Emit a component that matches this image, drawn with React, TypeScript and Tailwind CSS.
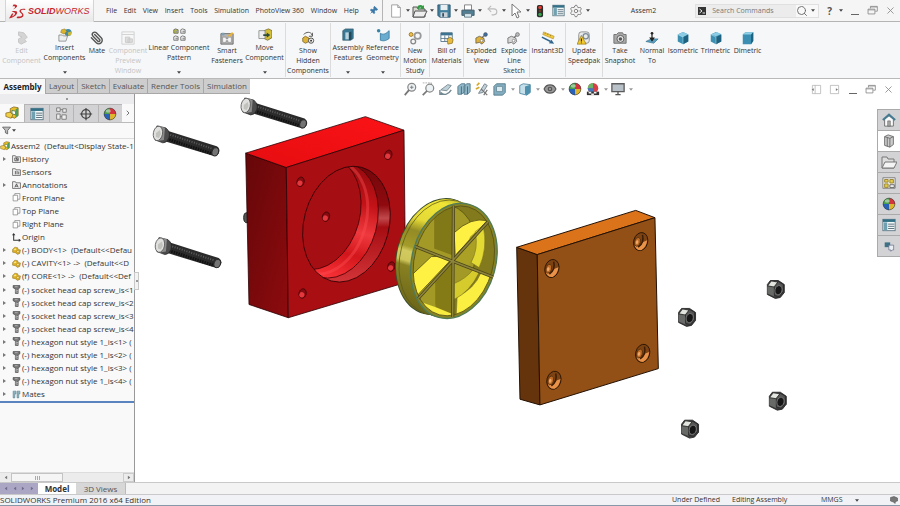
import React from "react";
import type { ReactNode } from "react";
import { Search, X, Pin, Settings, Paperclip, Undo2, Eye, ChevronRight } from "lucide-react";

type IconProps = { children: ReactNode; size?: string };

function Icon({ children, size = "size-[14px]" }: IconProps) {
  return (
    <svg viewBox="0 0 16 16" className={`${size} shrink-0`} aria-hidden="true">
      {children}
    </svg>
  );
}

function Caret({ className = "text-[#444]" }: { className?: string }) {
  return (
    <svg viewBox="0 0 6 4" className={`h-[3px] w-[4px] shrink-0 ${className}`} aria-hidden="true">
      <path d="M0 0h6L3 4z" fill="currentColor" />
    </svg>
  );
}

/* ---------- drawings for the icons ---------- */

const partShape = (
  <>
    <path d="M1 6l4-4 5 1 1 3 4 1-1 6-4 2-4-3-5-1z" fill="#dcae22" stroke="#7d6312" strokeWidth=".8" />
    <path d="M3 6l3-2 2 2-3 2z" fill="#fbe98d" />
    <circle cx="10.500" cy="10" r="2" fill="#fff2a8" stroke="#8b6a10" strokeWidth=".7" />
  </>
);

const assemblyShape = (
  <>
    <path d="M6 3l4-2 5 1v9l-4 3-5-2z" fill="#e8bd2b" stroke="#755d12" strokeWidth=".8" />
    <path d="M8 5l4 1v4l-4-1z" fill="#fff" stroke="#5b7f49" />
    <path d="M1 8l5-1 3 3-2 4-6-2z" fill="#f2cd46" stroke="#806616" strokeWidth=".8" />
    <path d="M12 4l3-2v9l-3 2z" fill="#4f9c57" />
  </>
);

function Cube({ variant = 0 }: { variant?: number }) {
  if (variant === 2) {
    return (
      <Icon>
        <path d="M2 4l3-2.500h9v10L11.500 15H2z" fill="#3b8fb2" />
        <path d="M2 4l3-2.500h9L11.500 4z" fill="#8fd0e6" />
        <path d="M11.500 4L14 1.500v10L11.500 15z" fill="#1f6180" />
      </Icon>
    );
  }
  return (
    <Icon>
      <path d="M8 1l6 3v8l-6 3-6-3V4z" fill="#3b8fb2" />
      <path d={variant ? "M2 4l7-3 5 2.500L8 6z" : "M2 4l6-3 6 3-6 3z"} fill="#8ccbe4" />
      <path d="M8 7l6-3v8l-6 3z" fill="#1f6180" />
      <path d="M2 4l6 3v8" fill="none" stroke="#b9e2f0" strokeWidth=".6" />
    </Icon>
  );
}

function Ball({ size }: { size?: string }) {
  return (
    <Icon size={size}>
      <circle cx="8" cy="8" r="7" fill="#e8e8e8" />
      <path d="M8 8V1a7 7 0 0 0-7 7z" fill="#4aa04c" />
      <path d="M8 8H1a7 7 0 0 0 7 7z" fill="#2862b8" />
      <path d="M8 8v7a7 7 0 0 0 7-7z" fill="#e0b52e" />
      <path d="M8 8h7a7 7 0 0 0-7-7z" fill="#d5343c" />
      <ellipse cx="6" cy="4.500" rx="3" ry="2" fill="#fff" opacity=".45" />
      <circle cx="8" cy="8" r="6.700" fill="none" stroke="#3c3c3c" strokeWidth=".7" />
    </Icon>
  );
}

function Gears({ left, right }: { left: string; right: string }) {
  return (
    <Icon>
      <path d="M4.500 10.500L12 4" stroke="#777" strokeWidth="1.500" />
      <circle cx="12" cy="4" r="2.200" fill={right} stroke="#555" strokeWidth=".6" />
      <path d="M1 8l4-2 5 2 1 4-3 3-3-2-4 1z" fill={left} stroke="#555" strokeWidth=".8" />
      <circle cx="7.500" cy="11" r="1.500" fill="#fff" stroke="#555" strokeWidth=".6" />
    </Icon>
  );
}

function ListSheet({ size }: { size?: string }) {
  return (
    <Icon size={size}>
      <rect x="1" y="1.500" width="14" height="13" fill="#f2f7f8" stroke="#5a7480" />
      <rect x="1" y="1.500" width="14" height="3" fill="#317086" />
      <rect x="2" y="5" width="4" height="9" fill="#6fa1b0" />
      <path d="M7 7h7M7 9.500h7M7 12h7" stroke="#4b6370" strokeWidth="1" />
    </Icon>
  );
}

function Restore() {
  return (
    <Icon size="size-[11px]">
      <path d="M5 5V2h10v7h-3M1.500 6h10v7h-10z" fill="none" stroke="#888" strokeWidth="1.200" />
      <path d="M1.500 7.200h10M5 3h10" stroke="#888" />
    </Icon>
  );
}

function WindowButtons() {
  return (
    <div className="flex items-center gap-[7px] text-[#888]">
      <button aria-label="Minimize" className="flex size-[11px] items-end justify-center pb-px">
        <span className="h-px w-2 bg-[#666]" />
      </button>
      <button aria-label="Restore"><Restore /></button>
      <button aria-label="Close"><X className="size-[11px]" strokeWidth={1.8} /></button>
    </div>
  );
}

/* ---------- title bar ---------- */

const menus = ["File", "Edit", "View", "Insert", "Tools", "Simulation", "PhotoView 360", "Window", "Help"];

const quick: { name: string; wide: boolean; icon: ReactNode }[] = [
  {
    name: "New", wide: true,
    icon: <Icon><path d="M3 1h7l3 3v11H3z" fill="#fff" stroke="#999" /><path d="M10 1v3h3" fill="#ddd" stroke="#999" /></Icon>,
  },
  {
    name: "Open", wide: true,
    icon: (
      <Icon size="size-[16px]">
        <path d="M1 4h4l1 2h7v8H1z" fill="#d9d9d2" stroke="#555" />
        <path d="M3 8h12l-3 6H1z" fill="#eee" stroke="#555" />
        <path d="M5 5c0-3 4-4 6-2l1-1v4H8l1-1c-1-1-2 0-2 2z" fill="#359b45" />
      </Icon>
    ),
  },
  {
    name: "Save", wide: true,
    icon: (
      <Icon>
        <path d="M1 1h14v14H3l-2-2z" fill="#417f9c" stroke="#2d536a" />
        <rect x="4" y="1" width="8" height="6" fill="#e9eef0" />
        <rect x="4" y="9.500" width="8" height="5.500" fill="#c9d2d8" />
        <rect x="6" y="10.500" width="2" height="4" fill="#344f60" />
      </Icon>
    ),
  },
  {
    name: "Print", wide: true,
    icon: (
      <Icon>
        <path d="M4 1h8v6H4z" fill="#fff" stroke="#777" />
        <path d="M1 7h14v6H1z" fill="#527e93" stroke="#3f5967" />
        <path d="M4 11h8v4H4z" fill="#d7e9f0" stroke="#59717d" />
      </Icon>
    ),
  },
  { name: "Undo", wide: true, icon: <Undo2 className="size-[13px] text-[#bbb]" /> },
  {
    name: "Select", wide: true,
    icon: <Icon size="size-[16px]"><path d="M4 1v12l3-3 2 5 2-1-2-5h4z" fill="#fff" stroke="#777" /></Icon>,
  },
  {
    name: "Rebuild", wide: false,
    icon: (
      <Icon>
        <rect x="4.500" y="1" width="7" height="14" rx="2" fill="#2d2d2d" />
        <circle cx="8" cy="4" r="2" fill="#e33c32" />
        <circle cx="8" cy="8" r="1.500" fill="#6e3a20" />
        <circle cx="8" cy="12" r="2" fill="#37a34b" />
      </Icon>
    ),
  },
  { name: "File properties", wide: false, icon: <ListSheet size="size-[13px]" /> },
  { name: "Options", wide: true, icon: <Settings className="size-[14px] text-[#777]" strokeWidth={1.5} /> },
];

function TitleBar() {
  return (
    <header className="flex h-[22px] items-center border-b border-[#b4b4b4] bg-[#f5f5f6]">
      <div className="ml-[5px] flex h-[23px] w-[89px] shrink-0 items-center gap-[2px] self-start border-x border-b border-[#d5d5d5] bg-gradient-to-b from-white to-[#e8e8e8] pl-[3px] text-[#c3272d]">
        <svg viewBox="0 0 34 34" className="size-[17px] shrink-0" role="img" aria-label="DS">
          <path d="M9 3c5 0 8 1 7 4-1 2-4 4-8 6 3-3 5-5 4-6-1-1-3-1-5 0zM5 17c8-2 13-1 11 4-2 5-8 8-16 10l6-10h3l-3 6c4-2 6-4 6-6 0-2-3-3-7-4z" fill="currentColor" />
          <path d="M33 12c-7-2-13 1-12 5 1 3 7 5 5 8-1 2-5 2-9 2l-2 3c7 1 13 0 14-5 1-4-5-6-5-9 0-2 3-3 8-2z" fill="currentColor" />
        </svg>
        <span className="font-['Liberation_Sans',sans-serif] text-[9px] leading-none font-bold italic">
          SOLID<span className="font-normal">WORKS</span>
        </span>
      </div>
      <nav aria-label="Main menu" className="ml-3 flex w-[253px] shrink-0 items-center justify-between">
        {menus.map((m) => (
          <button key={m} className="whitespace-nowrap">{m}</button>
        ))}
      </nav>
      <button aria-label="Keep menu visible" className="ml-[10px]">
        <Pin className="size-[9px] rotate-45 fill-[#3c79a8] text-[#3c79a8]" />
      </button>
      <div className="ml-1 h-full w-px bg-[#b5b5b5]" />
      <div className="ml-[5px] flex shrink-0 items-center">
        {quick.map((q) => (
          <button key={q.name} aria-label={q.name} className={`flex items-center justify-between ${q.wide ? "w-6 pr-[2px]" : "w-[18px]"}`}>
            <span className="flex w-4 justify-center">{q.icon}</span>
            {q.wide && <Caret />}
          </button>
        ))}
      </div>
      <h1 className="min-w-0 flex-1 text-center text-[7px] font-normal">Assem2</h1>
      <div className="flex h-[14px] w-[124px] shrink-0 items-center border border-[#e0e0e0] bg-[#ececec]">
        <Icon size="ml-[2px] size-[8px]">
          <rect width="16" height="16" fill="#333" />
          <path d="M3 4l5 4-5 4M9 12h5" stroke="#fff" strokeWidth="1.800" fill="none" />
        </Icon>
        <input aria-label="Search Commands" placeholder="Search Commands" className="ml-[6px] min-w-0 flex-1 bg-transparent placeholder:text-[#777] outline-none" />
        <button aria-label="Search" className="flex h-full w-[22px] items-center justify-between bg-[#f8f8f8] pr-[3px]">
          <Search className="size-[12px] text-[#666]" strokeWidth={1.8} />
          <Caret />
        </button>
      </div>
      <button aria-label="Help" className="mr-[6px] ml-[8px] flex items-center gap-[7px] text-[10px] font-bold text-[#555]">
        ?<Caret />
      </button>
      <div className="pr-[4px]"><WindowButtons /></div>
    </header>
  );
}

/* ---------- ribbon ---------- */

type Tool = { lines: string[]; width: string; icon: ReactNode; menu?: boolean; disabled?: boolean; sep?: boolean };

const tools: Tool[] = [
  {
    lines: ["Edit", "Component"], width: "w-[43px]", disabled: true,
    icon: <Icon><path d="M4 1l6 1 4 5-3 3 2 2-6 3-3-2V9l4-2-4-2z" fill="#d4d4d4" stroke="#c3c3c3" /></Icon>,
  },
  {
    lines: ["Insert", "Components"], width: "w-[43px]", menu: true,
    icon: (
      <Icon>
        <circle cx="11.500" cy="5" r="4" fill="#3d8ba5" />
        <path d="M4 2l4-1 2 3-3 3-4-2z" fill="#ddb32b" stroke="#7a6518" strokeWidth=".5" />
        <path d="M11 5l4-1v4l-3 1z" fill="#c8b73a" />
        <path d="M1 8h4l1 1h5l-2 6H1z" fill="#eceef0" stroke="#777" strokeWidth=".8" />
      </Icon>
    ),
  },
  { lines: ["Mate"], width: "w-[22px]", icon: <Paperclip className="size-[14px] -scale-x-100 text-[#555]" strokeWidth={2.4} /> },
  {
    lines: ["Component", "Preview", "Window"], width: "w-[40px]", disabled: true,
    icon: <Icon><path d="M1 1h14v14H1zM1 4h14" fill="none" stroke="#cfcfcf" /><path d="M5 7h5v6H5zM8 9h5v4H8z" fill="#dedede" stroke="#c8c8c8" /></Icon>,
  },
  {
    lines: ["Linear Component", "Pattern"], width: "w-[62px]", menu: true,
    icon: (
      <Icon>
        <path d="M2 2l2-1 3 1v4H2z" fill="#b8bd45" stroke="#555" strokeWidth=".8" />
        <path d="M10 2l2-1 3 1v4h-5zM2 10l2-1 3 1v4H2zM10 10l2-1 3 1v4h-5z" fill="#eee" stroke="#555" strokeWidth=".8" />
        <path d="M4 3h3v2H4zM12 3h3v2h-3zM4 11h3v2H4zM12 11h3v2h-3z" fill="#999" />
      </Icon>
    ),
  },
  {
    lines: ["Smart", "Fasteners"], width: "w-[34px]",
    icon: (
      <Icon>
        <path d="M1 3h14v12H1z" fill="#b5b5b5" stroke="#666" />
        <path d="M3 7h4v2h2V7h4v6H9v-2H7v2H3z" fill="#f5f5f5" stroke="#777" strokeWidth=".6" />
        <path d="M9 5l5-4 1 2-4 4z" fill="#e9b33a" />
        <path d="M2 2h3v3H2z" fill="#7f9fb0" />
      </Icon>
    ),
  },
  {
    lines: ["Move", "Component"], width: "w-[41px]", menu: true, sep: true,
    icon: (
      <Icon>
        <path d="M7 3l5-2 4 2v8l-5 3-4-2z" fill="#d5bf36" stroke="#65591a" strokeWidth=".8" />
        <path d="M1 3h7v9H1z" fill="#eee" stroke="#777" strokeWidth=".8" />
        <path d="M6 7h4V5l4 3-4 3V9H6z" fill="#2e4b38" />
      </Icon>
    ),
  },
  {
    lines: ["Show", "Hidden", "Components"], width: "w-[44px]", sep: true,
    icon: (
      <Icon>
        <path d="M3 4c3-3 8-4 10 1M13 2v4H9" fill="none" stroke="#444" />
        <path d="M2 8l3-2 4 2v4l-4 2-3-2z" fill="#ddb33c" stroke="#6b5512" strokeWidth=".8" />
        <circle cx="11.500" cy="11" r="3" fill="#eee" stroke="#444" />
        <circle cx="11.500" cy="11" r="1" fill="#222" />
      </Icon>
    ),
  },
  {
    lines: ["Assembly", "Features"], width: "w-[34px]", menu: true,
    icon: (
      <Icon>
        <path d="M2 3l3-2h9v11l-3 2H2z" fill="#3a7894" stroke="#2c5264" strokeWidth=".7" />
        <path d="M5 5h4v8H5z" fill="#b9d4df" />
        <path d="M9 5l3-1v9l-3 1z" fill="#20495c" />
      </Icon>
    ),
  },
  {
    lines: ["Reference", "Geometry"], width: "w-[35px]", menu: true, sep: true,
    icon: (
      <Icon>
        <circle cx="3" cy="3" r="2" fill="#3a83a6" />
        <path d="M5 6c3 2 6 1 10-3v9c-4 3-7 3-10 2z" fill="#6aacd0" stroke="#3a7ea4" />
      </Icon>
    ),
  },
  {
    lines: ["New", "Motion", "Study"], width: "w-[28px]", sep: true,
    icon: (
      <Icon>
        <circle cx="3.500" cy="4" r="2.200" fill="#f0c04a" stroke="#9a7420" />
        <circle cx="11" cy="5.500" r="3.600" fill="none" stroke="#999" strokeWidth="2" />
        <circle cx="6" cy="12" r="2.700" fill="none" stroke="#888" strokeWidth="1.500" />
      </Icon>
    ),
  },
  {
    lines: ["Bill of", "Materials"], width: "w-[33px]", sep: true,
    icon: (
      <Icon>
        <path d="M1 2h13v10H1z" fill="#fff" stroke="#557688" />
        <path d="M1 2h13v3H1z" fill="#3c7391" />
        <path d="M1 8.500h13M5.500 5v7M10 5v7" stroke="#557688" />
        <path d="M8 9l4-2 3 3-1 4-5 1z" fill="#e7bb3f" stroke="#806213" strokeWidth=".7" />
      </Icon>
    ),
  },
  { lines: ["Exploded", "View"], width: "w-[35px]", icon: <Gears left="#e0b23a" right="#3d6ea0" /> },
  { lines: ["Explode", "Line", "Sketch"], width: "w-[30px]", sep: true, icon: <Gears left="#d8d8d8" right="#b9b9b9" /> },
  {
    lines: ["Instant3D"], width: "w-[35px]", sep: true,
    icon: (
      <Icon>
        <path d="M2 4l1-3 12 5-1 3z" fill="#f0ca3e" stroke="#a9851d" strokeWidth=".6" />
        <path d="M5 2l-.5 1.500M8 3l-.5 1.500M11 4.500L10.500 6" stroke="#7d6312" strokeWidth=".7" />
        <path d="M1 7l10 5" stroke="#2f6690" strokeWidth="1.800" />
        <path d="M15 14.500l-6-.5 3-4z" fill="#2f6690" />
      </Icon>
    ),
  },
  {
    lines: ["Update", "Speedpak"], width: "w-[36px]", sep: true,
    icon: (
      <Icon>
        <rect x="2" y="1" width="12" height="13" rx="3" fill="#e8eaeb" stroke="#888" />
        <circle cx="10" cy="6" r="3" fill="none" stroke="#7c8c99" strokeWidth="1.500" />
        <path d="M5 5l5.500 10H0z" fill="#f3c92e" stroke="#8a6d0d" strokeWidth=".7" />
        <path d="M5 8.500v3.500M5 13v1" stroke="#222" strokeWidth="1.200" />
      </Icon>
    ),
  },
  {
    lines: ["Take", "Snapshot"], width: "w-[34px]",
    icon: (
      <Icon>
        <path d="M1 4h3l2-2h5l1 2h3v10H1z" fill="#a9a9a9" stroke="#6b6b6b" />
        <circle cx="8.500" cy="9" r="4" fill="#e4e4e4" stroke="#555" />
        <circle cx="8.500" cy="9" r="2" fill="#555" />
      </Icon>
    ),
  },
  {
    lines: ["Normal", "To"], width: "w-[30px]",
    icon: (
      <Icon>
        <path d="M1 12l6-3h8l-5 5z" fill="#5ba0c0" stroke="#2f6d8c" strokeWidth=".7" />
        <path d="M8 3v6M6 8l2 3 2-3z" stroke="#222" strokeWidth="1.400" />
        <circle cx="8" cy="2.500" r="1.500" fill="#222" />
      </Icon>
    ),
  },
  { lines: ["Isometric"], width: "w-[32px]", icon: <Cube /> },
  { lines: ["Trimetric"], width: "w-[33px]", icon: <Cube variant={1} /> },
  { lines: ["Dimetric"], width: "w-[31px]", icon: <Cube variant={2} /> },
];

function Ribbon() {
  return (
    <div role="toolbar" aria-label="Assembly commands" className="flex h-[57px] border-b border-[#b9b9b9] bg-[#f6f7f8]">
      {tools.map((t) => (
        <React.Fragment key={t.lines.join(" ")}>
          <button
            disabled={t.disabled}
            className={`flex shrink-0 flex-col items-center leading-[10px] whitespace-nowrap ${t.width} ${t.menu ? "pt-[6px]" : "pt-[9px]"} ${t.disabled ? "text-[#c4c4c4]" : ""}`}
          >
            <span className="flex h-[15px] items-start justify-center">{t.icon}</span>
            {t.lines.map((l) => (
              <span key={l}>{l}</span>
            ))}
            {t.menu && <span className="mt-[8px]"><Caret /></span>}
          </button>
          {t.sep && <div className="my-px w-px shrink-0 bg-[#dcdcdc]" />}
        </React.Fragment>
      ))}
    </div>
  );
}

/* ---------- command tabs and view toolbar ---------- */

const tabs = [
  ["Layout", "w-8"], ["Sketch", "w-8"], ["Evaluate", "w-[38px]"], ["Render Tools", "w-[56px]"], ["Simulation", "w-[47px]"],
];

const viewTools: { name: string; menu?: boolean; icon: ReactNode }[] = [
  { name: "Zoom to fit", icon: <Icon><circle cx="10" cy="6" r="4.500" fill="#edf3f5" stroke="#888" strokeWidth="1.400" /><path d="M7 9l-5 6" stroke="#777" strokeWidth="2" /><path d="M8 6h4M10 4v4" stroke="#777" /></Icon> },
  { name: "Zoom to area", icon: <Icon><path d="M2 1h10v9" fill="none" stroke="#aaa" strokeDasharray="2 1" /><circle cx="10" cy="7" r="4.500" fill="#edf3f5" stroke="#888" strokeWidth="1.400" /><path d="M7 10l-5 5" stroke="#777" strokeWidth="2" /></Icon> },
  { name: "Previous view", icon: <Icon><path d="M2 9l8-6 4 1-5 6z" fill="#bed1d9" stroke="#76868e" /><path d="M2 12c4 4 9 2 12-3M1 9v5h5" fill="none" stroke="#718791" strokeWidth="1.500" /></Icon> },
  { name: "Section view", icon: <Icon><path d="M1 5l4-3h4v9l-4 3H1zM8 5l3-3h4v9l-3 3H8z" fill="#91b8c8" stroke="#55798a" /><path d="M5 5v9M12 5v9" stroke="#3f6579" /></Icon> },
  { name: "Dynamic annotation", icon: <Icon><path d="M4 13L11 2l3 2-5 8z" fill="#c3d2d9" stroke="#708089" /><path d="M2 4l3-3M1 8l4-2" stroke="#d6a82c" strokeWidth="2" /><path d="M7 8l7 7M14 9l-4 6" stroke="#777" strokeWidth="1.400" /></Icon> },
  { name: "View orientation", menu: true, icon: <Icon><path d="M1 5l3-3h10v10l-3 3H1z" fill="#83aec1" stroke="#55798a" /><path d="M4 5h7v6H4z" fill="#d8e9ef" stroke="#6c8b9a" /></Icon> },
  { name: "Display style", menu: true, icon: <Icon><path d="M2 4l4-2 8 1v9l-4 3-8-2z" fill="#c5e0ea" stroke="#5488a0" /><path d="M8 5l6-2v9l-4 3-2-1z" fill="#4e91ae" /></Icon> },
  { name: "Hide/show items", menu: true, icon: <Eye className="size-[14px] fill-[#999] text-[#555]" strokeWidth={2} /> },
  { name: "Edit appearance", icon: <Ball /> },
  { name: "Apply scene", menu: true, icon: <Icon><circle cx="8" cy="7" r="6" fill="#d84048" /><path d="M8 7V1a6 6 0 0 0-6 6z" fill="#6bb568" /><path d="M8 7H2a6 6 0 0 0 6 6z" fill="#4178bd" /><path d="M1 11h14v4H1z" fill="#333" /><path d="M3 11h3v2H3zM9 11h3v2H9zM6 13h3v2H6z" fill="#eee" /></Icon> },
  { name: "View settings", menu: true, icon: <Icon><path d="M1 2h14v9H1z" fill="#b8c0c8" stroke="#5c5c5c" strokeWidth="1.500" /><path d="M8 11v3M5 14.500h6" stroke="#555" strokeWidth="1.500" /></Icon> },
];

function TabRow() {
  return (
    <div className="flex h-[15px]">
      <div role="tablist" aria-label="Command tabs" className="flex w-[250px] shrink-0 text-[8px] text-[#555]">
        <button role="tab" aria-selected="true" className="w-[45px] bg-[#f8f8f8] text-center font-bold text-[#222]">Assembly</button>
        {tabs.map(([name, w]) => (
          <button key={name} role="tab" aria-selected="false" className={`border-b border-l border-[#a8a8a8] bg-[#cdcdcd] whitespace-nowrap ${w}`}>{name}</button>
        ))}
      </div>
      <div role="toolbar" aria-label="View" className="mt-[3px] flex flex-1 items-start justify-center pr-[26px]">
        {viewTools.map((v) => (
          <button key={v.name} aria-label={v.name} className={`flex h-[14px] items-center gap-[4px] pl-[2px] ${v.menu ? "w-[25px]" : "w-[18px]"}`}>
            {v.icon}
            {v.menu && <Caret className="text-[#999]" />}
          </button>
        ))}
      </div>
      <div className="mt-[5px] flex h-[11px] shrink-0 items-center gap-[7px] pr-[6px]">
        <button aria-label="Collapse left"><Icon size="size-[11px]"><path d="M2 2h12v12H2zM6 2v12" fill="none" stroke="#aaa" /><path d="M1 8l3-2v4z" fill="#777" /></Icon></button>
        <button aria-label="Collapse right"><Icon size="size-[11px]"><path d="M2 2h12v12H2z" fill="none" stroke="#aaa" /><path d="M13 8l-3-2v4z" fill="#777" /></Icon></button>
        <WindowButtons />
      </div>
    </div>
  );
}

/* ---------- feature tree ---------- */

function FolderGlyph({ mark }: { mark: string }) {
  return (
    <Icon size="size-[9px]">
      <path d="M1 3h5l1 2h8v10H1z" fill="#f1f1f1" stroke="#555" strokeWidth="1.300" />
      <path d={mark} fill="none" stroke="#444" strokeWidth="1.400" />
    </Icon>
  );
}

const planeGlyph = <Icon size="size-[9px]"><path d="M2 4h8v10H2zM5 4V1h9v10h-4" fill="#fff" stroke="#777" strokeWidth="1.200" /></Icon>;
const partGlyph = <Icon size="size-[9px]">{partShape}</Icon>;
const screwGlyph = <Icon size="size-[9px]"><path d="M2 1h12v4l-3 2v8H6V7L2 5z" fill="#777" stroke="#333" /><path d="M6 9l5 1M6 12l5 1M5 3h5" stroke="#ddd" /></Icon>;

const treeRows: { label: string; icon: ReactNode; open?: boolean }[] = [
  { label: "History", open: true, icon: <FolderGlyph mark="M5 7h6v5H5zM8 7v3h3" /> },
  { label: "Sensors", icon: <FolderGlyph mark="M6 7v6M9 7v6M12 8v5" /> },
  { label: "Annotations", open: true, icon: <FolderGlyph mark="M5 13l3-6 3 6M6 11h4" /> },
  { label: "Front Plane", icon: planeGlyph },
  { label: "Top Plane", icon: planeGlyph },
  { label: "Right Plane", icon: planeGlyph },
  { label: "Origin", icon: <Icon size="size-[9px]"><path d="M3 2v11h11" fill="none" stroke="#333" strokeWidth="1.800" /><path d="M0 4l3-4 3 4zM12 10l4 3-4 3z" fill="#333" /></Icon> },
  { label: "(-) BODY<1>  (Default<<Defau", open: true, icon: partGlyph },
  { label: "(-) CAVITY<1> ->  (Default<<D", open: true, icon: partGlyph },
  { label: "(f) CORE<1> ->  (Default<<Def", open: true, icon: partGlyph },
  ...[1, 2, 3, 4].map((n) => ({ label: `(-) socket head cap screw_is<${n}`, open: true, icon: screwGlyph })),
  ...[1, 2, 3, 4].map((n) => ({ label: `(-) hexagon nut style 1_is<${n}> (`, open: true, icon: screwGlyph })),
  { label: "Mates", open: true, icon: <Icon size="size-[9px]"><path d="M2 2h5v5H5v7H2zM9 2h5v5h-2v7H9z" fill="#8db3c0" stroke="#557e8c" /></Icon> },
];

const panelTabs = [
  { name: "Property manager", icon: <ListSheet /> },
  { name: "Configurations", icon: <Icon><path d="M3 1h4v4H3zM3 8h4v6H3zM10 2h4v4h-4zM9 9h5v5H9zM7 3h3M7 11h2" fill="#eee" stroke="#777" /></Icon> },
  { name: "Dimensions", icon: <Icon><circle cx="8" cy="8" r="5" fill="none" stroke="#444" strokeWidth="1.500" /><path d="M8 1v14M1 8h14" stroke="#444" strokeWidth="1.400" /></Icon> },
  { name: "Display manager", icon: <Ball /> },
];

function FeaturePanel() {
  return (
    <aside className="relative flex w-[135px] shrink-0 flex-col border-r border-[#999] bg-[#f9f9fa]">
      <div className="flex h-[10px] shrink-0 items-center justify-center bg-[#ececee]">
        <span className="size-[2px] bg-[#999]" />
      </div>
      <div role="tablist" aria-label="Feature manager" className="flex h-[19px] shrink-0 border-b border-[#bbb]">
        <button role="tab" aria-selected="true" aria-label="Feature tree" className="flex w-6 items-center justify-center"><Icon>{assemblyShape}</Icon></button>
        {panelTabs.map((t) => (
          <button key={t.name} role="tab" aria-selected="false" aria-label={t.name} className="flex flex-1 items-center justify-center border-t border-l border-[#b5b5b5] bg-[#d2d2d4]">{t.icon}</button>
        ))}
        <button aria-label="More tabs" className="flex w-3 items-center justify-center"><ChevronRight className="size-[8px]" /></button>
      </div>
      <button aria-label="Filter" className="flex h-4 shrink-0 items-center gap-px border-b border-[#ddd] pl-[2px]">
        <Icon size="size-[9px]"><path d="M1 2h14L10 8v6l-4-2V8z" fill="#bbb" stroke="#555" strokeWidth="1.400" /></Icon>
        <Caret />
      </button>
      <ul className="flex h-[264px] shrink-0 flex-col border-b-2 border-[#5a84bd] text-[8px] whitespace-pre">
        <li className="flex flex-1 items-center"><Icon size="size-[10px]">{assemblyShape}</Icon><span className="pl-px">Assem2  (Default&lt;Display State-1</span></li>
        {treeRows.map((r) => (
          <li key={r.label} className="flex flex-1 items-center pl-[3px]">
            <span className="flex w-[9px] shrink-0 items-center">
              {r.open && <button aria-label={`Expand ${r.label}`}><svg viewBox="0 0 3 4" className="h-[4px] w-[3px]" aria-hidden="true"><path d="M0 0l3 2-3 2z" fill="#777" /></svg></button>}
            </span>
            {r.icon}
            <span className="pl-px">{r.label}</span>
          </li>
        ))}
      </ul>
      <div className="flex-1" />
      <div className="flex h-[10px] shrink-0 items-center justify-between border-t border-[#ddd] bg-[#ececec]">
        <button aria-label="Scroll left" className="flex w-[11px] justify-center"><Caret className="rotate-90 text-[#777]" /></button>
        <div className="flex h-[9px] w-[52px] items-center justify-center gap-px border border-[#c3c3c3] bg-[#f5f5f5]">
          <span className="h-1 w-px bg-[#aaa]" />
          <span className="h-1 w-px bg-[#aaa]" />
          <span className="h-1 w-px bg-[#aaa]" />
        </div>
        <div className="flex-1" />
        <button aria-label="Scroll right" className="flex h-full w-[11px] items-center justify-center border border-[#ccc]"><Caret className="-rotate-90 text-[#777]" /></button>
      </div>
      <button aria-label="Collapse panel" className="absolute top-[178px] -right-[5px] flex h-[18px] w-[5px] items-center justify-center border border-[#c8c8c8] bg-[#f3f3f3]">
        <span className="size-[2px] bg-[#999]" />
      </button>
    </aside>
  );
}

/* ---------- 3D model ---------- */

function Screw({ x, y }: { x: number; y: number }) {
  return (
    <g transform={`translate(${x} ${y})`}>
      <path d="M4-4L56 12.500q4 2.500 2 7Q56 23 52 22L3 7z" fill="#2b2b2b" />
      <path d="M7 0L52 15" stroke="#5d5d5d" strokeWidth="2" strokeDasharray="1 1.500" />
      <path d="M6 5L50 19.500" stroke="#111" strokeWidth="3" strokeDasharray="1.500 1" />
      <ellipse cx="54.500" cy="18" rx="3.200" ry="4.300" transform="rotate(15 54.500 18)" fill="#747474" stroke="#222" strokeWidth=".8" />
      <path d="M-4-8L5-6q5 4 3 10-2 5-6 5L-6 6z" fill="#4c4c4c" stroke="#222" strokeWidth=".7" />
      <path d="M-1-8l5 2-1 12-6 1z" fill="#8b8b8b" />
      <ellipse cx="-3" cy="-.5" rx="4.600" ry="7.300" transform="rotate(10 -3 -.5)" fill="#e0e0de" stroke="#555" strokeWidth=".8" />
      <path d="M-5-1l4-3 1 4-2 4-3-1z" fill="#c1c1bd" />
    </g>
  );
}

function Nut({ x, y }: { x: number; y: number }) {
  return (
    <g transform={`translate(${x} ${y})`}>
      <path d="M-8-4l3-4L3-8l6 4v8l-4 5-5 1-8-4z" fill="#3c3d3c" stroke="#1c1c1c" strokeWidth=".8" />
      <path d="M-7-3l3-4 6 1-3 4z" fill="#e3e5df" />
      <path d="M-8-2l7 1v9l-7-3z" fill="#676a67" />
      <path d="M-1-2l4-5 5 3v7L4 8l-5-1z" fill="#555" stroke="#1c1c1c" strokeWidth=".6" />
      <ellipse cx="3.500" cy=".8" rx="3.500" ry="4.700" transform="rotate(15)" fill="#161616" stroke="#888" strokeWidth=".7" />
    </g>
  );
}

function SmallHole({ x, y }: { x: number; y: number }) {
  return (
    <g transform={`translate(${x} ${y}) rotate(15)`}>
      <ellipse rx="3.600" ry="4.800" fill="#850b10" stroke="#3b0204" strokeWidth=".7" />
      <ellipse cx="-.3" cy="1.500" rx="2.600" ry="2.700" fill="#e3383d" />
    </g>
  );
}

function BoltHole({ x, y }: { x: number; y: number }) {
  return (
    <g transform={`translate(${x} ${y}) rotate(15)`}>
      <ellipse rx="7" ry="9.200" fill="#7d4211" stroke="#1f0f02" strokeWidth=".8" />
      <path d="M6-3Q7 4 3 8-2 10-5 5q6 2 7-5z" fill="#e8924a" />
      <path d="M0-7Q4 0-1 6" fill="none" stroke="#3d1d05" strokeWidth="1.500" />
      <ellipse cx="-3" cy="1" rx="2.800" ry="4.500" fill="#bd6c28" stroke="#4a2606" strokeWidth=".7" />
      <ellipse cx="-3.400" cy="1.500" rx="1.300" ry="2" fill="#f1a765" />
    </g>
  );
}

const rimSteps = [0, 2, 4, 6, 8, 10, 12];

function Model() {
  return (
    <svg viewBox="135 94 765 389" className="absolute inset-0 size-full" role="img" aria-label="Exploded mould assembly">
      <defs>
        <linearGradient id="redSide" x1="0" y1="0" x2="1" y2="1">
          <stop offset="0" stopColor="#650709" /><stop offset="1" stopColor="#8d0b0e" />
        </linearGradient>
        <linearGradient id="redTop" x1="0" y1="1" x2="1" y2="0">
          <stop offset="0" stopColor="#e50d10" /><stop offset="1" stopColor="#fb1317" />
        </linearGradient>
        <linearGradient id="redStep" x1="0" y1="0" x2="0" y2="1">
          <stop offset="0" stopColor="#960a0e" /><stop offset=".3" stopColor="#c31318" />
          <stop offset=".55" stopColor="#ee393e" /><stop offset=".75" stopColor="#d2161b" /><stop offset="1" stopColor="#fb3439" />
        </linearGradient>
        <linearGradient id="redBore" x1="0" y1="0" x2="0" y2="1">
          <stop offset="0" stopColor="#6d0609" /><stop offset=".35" stopColor="#8f0a0f" />
          <stop offset=".45" stopColor="#c0494c" /><stop offset=".52" stopColor="#a50d12" /><stop offset="1" stopColor="#d93a3e" />
        </linearGradient>
        <linearGradient id="rim" gradientUnits="userSpaceOnUse" x1="0" y1="-60" x2="0" y2="60">
          <stop offset="0" stopColor="#c2b92b" /><stop offset=".06" stopColor="#f0e535" /><stop offset=".24" stopColor="#e5da37" />
          <stop offset=".34" stopColor="#938b24" /><stop offset=".48" stopColor="#a39b29" /><stop offset=".52" stopColor="#d2c95f" />
          <stop offset=".6" stopColor="#cdc45a" /><stop offset=".64" stopColor="#898122" /><stop offset="1" stopColor="#6a6418" />
        </linearGradient>
        <clipPath id="bore"><ellipse cx="346" cy="224.500" rx="42.700" ry="59" transform="rotate(15 346 224.500)" /></clipPath>
        <clipPath id="cup"><ellipse cx="453.700" cy="261.300" rx="39.500" ry="56" transform="rotate(15 453.700 261.300)" /></clipPath>
      </defs>

      <Screw x={248} y={106} />
      <Screw x={160} y={134} />
      <Screw x={162} y={246} />
      <ellipse cx="246" cy="218" rx="3" ry="5" fill="#555" stroke="#222" />

      <g stroke="#2b0305" strokeWidth=".8" strokeLinejoin="round">
        <path d="M245 153.300L285.700 167.700 287.700 318.300 248.300 305z" fill="url(#redSide)" />
        <path d="M245 153.300L365 116.700 403.700 130.300 285.700 167.700z" fill="url(#redTop)" />
        <path d="M285.700 167.700L403.700 130.300 405.300 283 287.700 318.300z" fill="#a90e13" />
      </g>
      <g clipPath="url(#bore)">
        <rect x="295" y="160" width="100" height="130" fill="url(#redBore)" />
        <g stroke="#4a0406" strokeWidth=".8">
          <ellipse cx="334" cy="220.500" rx="42.700" ry="59" transform="rotate(15 334 220.500)" fill="url(#redStep)" />
          <ellipse cx="324" cy="217.500" rx="42" ry="58" transform="rotate(15 324 217.500)" fill="none" stroke="#ff5054" opacity=".4" strokeWidth="3" />
          <ellipse cx="317" cy="213" rx="42.500" ry="58" transform="rotate(15 317 213)" fill="#a50e13" />
        </g>
      </g>
      <ellipse cx="346" cy="224.500" rx="42.700" ry="59" transform="rotate(15 346 224.500)" fill="none" stroke="#3b0305" strokeWidth=".9" />
      <SmallHole x={300} y={182} />
      <SmallHole x={388} y={155} />
      <SmallHole x={302} y={294} />
      <SmallHole x={391} y={267} />
      <SmallHole x={325.500} y={217} />

      <ellipse cx="439" cy="257" rx="42" ry="58.700" transform="rotate(15 439 257)" fill="none" stroke="#3b4d2b" strokeWidth="1.800" />
      {rimSteps.map((s) => (
        <ellipse key={s} rx="42" ry="58.700" transform={`translate(${439 + s} ${257 + s * 0.3}) rotate(15)`} fill="url(#rim)" />
      ))}
      <ellipse cx="442" cy="258" rx="42" ry="58.700" transform="rotate(15 442 258)" fill="none" stroke="#5b5a1d" strokeWidth=".7" />
      <ellipse cx="453.700" cy="261.300" rx="42" ry="58.700" transform="rotate(15 453.700 261.300)" fill="#89841f" stroke="#517b58" strokeWidth="1.400" />
      <g clipPath="url(#cup)">
        <rect x="405" y="200" width="96" height="125" fill="#827a1c" />
        <ellipse cx="437" cy="257" rx="38" ry="53" transform="rotate(15 437 257)" fill="#a29926" stroke="#5c5613" strokeWidth=".8" />
        <path d="M434 207H453V256L434 249z" fill="#817817" />
        <path d="M435 280L452 262V318H443Q436 314 435 304z" fill="#857b16" />
        <path d="M454 233Q471 217 487 221L455 256z" fill="#fff044" stroke="#6d661b" />
        <path d="M411 276L431 257Q442 256 450 261L417 296z" fill="#fff044" stroke="#6d661b" />
        <path d="M454 256Q466 249 470 237L480 228Q477 255 467 268L454 263z" fill="#aaa026" />
        <path d="M475 232Q479 248 471 263L479 268Q488 248 483 226z" fill="#e4da34" stroke="#777020" strokeWidth=".5" />
        <path d="M457 297Q474 290 481 273L494 277Q481 307 456 317z" fill="#fbef42" stroke="#777020" strokeWidth=".6" />
        <path d="M454 284Q466 279 473 270L479 273Q470 292 454 300z" fill="#d6cb2d" stroke="#777020" strokeWidth=".6" />
        <path d="M419 302Q435 307 451 314L450 323Q429 320 419 302z" fill="#f8ec41" />
      </g>
      <ellipse cx="453.700" cy="261.300" rx="39.500" ry="56" transform="rotate(15 453.700 261.300)" fill="none" stroke="#56511c" strokeWidth=".8" />
      <g fill="none" stroke="#4c461a" strokeWidth="3.200">
        <path d="M453.300 206L452.500 317.500M415 247L493 277.500M488 222L418 299" />
      </g>
      <g fill="none" stroke="#8d843b" strokeWidth="1.600">
        <path d="M453.300 206L452.500 317.500M415 247L493 277.500M488 222L418 299" />
      </g>

      <g stroke="#241104" strokeWidth="1" strokeLinejoin="round">
        <path d="M516.700 247.700L537.300 255 540 405.700 520 400z" fill="#66340c" />
        <path d="M516.700 247.700L636 210.700 655.300 218 537.300 255z" fill="#db731b" />
        <path d="M537.300 255L655.300 218 658.700 369.300 540 405.700z" fill="#925016" />
      </g>
      <BoltHole x={552} y={269} />
      <BoltHole x={641} y={242} />
      <BoltHole x={554} y={381} />
      <BoltHole x={643} y={354} />

      <Nut x={687} y={317} />
      <Nut x={776} y={289} />
      <Nut x={690} y={429} />
      <Nut x={778} y={401} />
    </svg>
  );
}

const paneTools: { name: string; icon: ReactNode }[] = [
  { name: "Resources", icon: <Icon><path d="M3 7v8h10V7L8 3z" fill="#fafafa" stroke="#666" /><path d="M1 8l7-6 7 6" fill="none" stroke="#477b91" strokeWidth="2.500" /><path d="M6.500 9h3v6h-3z" fill="#a9a9a9" stroke="#555" strokeWidth=".6" /></Icon> },
  { name: "Design library", icon: <Icon><path d="M3 3l4-2 6 2v9l-4 3-6-2z" fill="#ccc" stroke="#666" /><path d="M6 4v10M9 5v10M3 3l6 2 4-2" stroke="#666" fill="none" /></Icon> },
  { name: "File explorer", icon: <Icon size="size-[16px]"><path d="M1 3h5l1 2h6v9H1z" fill="#ddd" stroke="#777" /><path d="M4 8h12l-3 6H1z" fill="#f4f4f4" stroke="#777" /></Icon> },
  { name: "View palette", icon: <Icon><path d="M1 2h14v12H1z" fill="#eee" stroke="#777" /><path d="M3 4h4v3H3zM9 4h4v4H9zM3 9h4v4H3z" fill="#e5cc4b" stroke="#958028" /><path d="M9 10h5v3H9z" fill="#fff" stroke="#555" /></Icon> },
  { name: "Appearances", icon: <Ball /> },
  { name: "Custom properties", icon: <ListSheet /> },
  { name: "Forum", icon: <Icon size="size-[11px]"><path d="M1 2h8v7H1z" fill="#3e7186" /><path d="M7 6h7v7h-2l-2 2v-2H7z" fill="#e8f0f4" stroke="#668" /></Icon> },
];

function Viewport() {
  return (
    <main className="relative min-w-0 flex-1">
      <Model />
      <div role="toolbar" aria-label="Task pane" className="absolute top-[15px] right-0 w-[23px] border-t border-l border-[#aaa]">
        {paneTools.map((p) => (
          <button key={p.name} aria-label={p.name} className={`flex h-[21px] w-full items-center justify-center border-b border-[#aaa] ${p.name === "Design library" ? "bg-white" : "bg-[#d3d3d5]"}`}>
            {p.icon}
          </button>
        ))}
      </div>
    </main>
  );
}

/* ---------- footer ---------- */

function Footer() {
  return (
    <footer>
      <div className="flex h-[13px] border-y border-[#c9c9c9] bg-[#f3f3f3] text-[8px]">
        <div className="flex w-[38px] items-center justify-evenly bg-[#aaa6c3]">
          {["First", "Previous", "Next", "Last"].map((n, i) => (
            <button key={n} aria-label={n}><Caret className={i < 2 ? "rotate-90 text-[#716c92]" : "-rotate-90 text-[#716c92]"} /></button>
          ))}
        </div>
        <button className="w-[38px] bg-white leading-[11px] font-bold">Model</button>
        <button className="w-[50px] border-r border-[#bbb] bg-[#d7d7d7] leading-[11px] text-[#555]">3D Views</button>
      </div>
      <div className="flex h-[11px] items-center border-b border-[#8798a8] bg-[#f1f2f5] text-[7px]">
        <span className="flex-1 text-[8px]">SOLIDWORKS Premium 2016 x64 Edition</span>
        <span className="w-[60px]">Under Defined</span>
        <span className="w-[89px]">Editing Assembly</span>
        <button className="flex w-[69px] items-center gap-3">MMGS<Caret /></button>
        <Icon size="mr-[2px] size-[8px]"><path d="M1 3l7-2 7 3v6l-4 1-1 4-3-3-6-2z" fill="#777" stroke="#444" /></Icon>
      </div>
    </footer>
  );
}

export default function App() {
  return (
    <div className="flex h-screen flex-col overflow-hidden bg-white font-['Open_Sans','Noto_Sans',sans-serif] text-[7px] leading-[10px] text-[#333]">
      <TitleBar />
      <Ribbon />
      <TabRow />
      <div className="flex min-h-0 flex-1">
        <FeaturePanel />
        <Viewport />
      </div>
      <Footer />
    </div>
  );
}
